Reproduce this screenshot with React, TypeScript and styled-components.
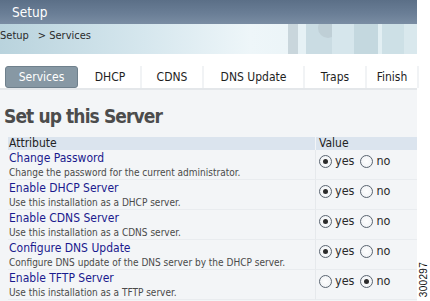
import styled, { createGlobalStyle } from "styled-components";

const GlobalStyle = createGlobalStyle`
  html, body {
    margin: 0;
    padding: 0;
    background: #ffffff;
  }
  body {
    font-family: "DejaVu Sans Condensed", "DejaVu Sans", sans-serif;
  }
`;

const Page = styled.div`
  display: flex;
  width: 430px;
  height: 301px;
  overflow: hidden;
  background: #ffffff;
`;

const Main = styled.div`
  width: 417px;
  display: flex;
  flex-direction: column;
`;

const TitleBar = styled.div`
  height: 24px;
  display: flex;
  align-items: center;
  padding-left: 12px;
  background: linear-gradient(180deg, #5b6f87 0%, #6b7f97 60%, #7a8da3 100%);
  color: #ffffff;
  font-size: 13.5px;
`;

const Crumbs = styled.div`
  height: 30px;
  display: flex;
  align-items: flex-start;
  justify-content: space-between;
  background: linear-gradient(90deg, #b9d3dd 0%, #d6e7ee 35%, #eef6f9 60%, #e4f0f4 100%);
  font-size: 11px;
  color: #2b2b2b;
`;

const Trail = styled.div`
  display: flex;
  gap: 9px;
  padding-top: 5px;
`;

const Deco = styled.svg`
  display: block;
  width: 129px;
  height: 30px;
`;

const TabBar = styled.div`
  display: flex;
  align-items: stretch;
  gap: 2px;
  padding: 12px 0 0 5px;
  height: 22px;
  background: #ffffff;
  border-bottom: 2px solid #e4e7ea;
`;

const Tab = styled.div<{ $active?: boolean; $w: number }>`
  width: ${({ $w }) => $w}px;
  height: 20px;
  display: flex;
  align-items: center;
  justify-content: center;
  font-size: 12px;
  border-radius: ${({ $active }) => ($active ? "3px" : "0")};
  color: ${({ $active }) => ($active ? "#ffffff" : "#1e1e1e")};
  background: ${({ $active }) => ($active ? "#8798a4" : "#ffffff")};
  border: ${({ $active }) => ($active ? "1px solid #6f808c" : "1px solid transparent")};
  box-shadow: ${({ $active }) => ($active ? "none" : "2px 0 0 #f1f3f5")};
`;

const Content = styled.div`
  flex: 1;
  background: #f3f5f7;
  padding: 14px 0 0 4px;
`;

const Heading = styled.h1`
  margin: 0 0 9px;
  font-size: 19px;
  letter-spacing: -0.9px;
  font-weight: bold;
  color: #4c4c4c;
  line-height: 24px;
`;

const Table = styled.div`
  margin-left: 4px;
  display: grid;
  grid-template-columns: 307px 1fr;
`;

const HeadCell = styled.div`
  background: #dbe4ee;
  font-size: 12px;
  line-height: 13px;
  color: #222;
  padding-left: 1px;
  & + & {
    padding-left: 3px;
    border-left: 1px solid #f3f5f7;
  }
`;

const AttrCell = styled.div`
  height: 30px;
  padding-left: 1px;
  border-bottom: 1px solid #e9ecef;
  box-sizing: border-box;
`;

const ValueCell = styled.div`
  height: 30px;
  display: flex;
  align-items: flex-start;
  gap: 6px;
  padding: 3px 0 0 3px;
  box-sizing: border-box;
  border-left: 1px solid #e6e9ec;
  border-bottom: 1px solid #e9ecef;
`;

const Name = styled.div`
  color: #1a1a8e;
  font-size: 12px;
  line-height: 15px;
  padding-top: 1px;
`;

const Desc = styled.div`
  color: #4a4a4a;
  font-size: 10px;
  line-height: 13px;
`;

const Choice = styled.label`
  display: flex;
  align-items: center;
  gap: 3px;
  font-size: 12.5px;
  color: #2a2a2a;
  line-height: 16px;
`;

const Dot = styled.span<{ $on?: boolean }>`
  width: 11px;
  height: 11px;
  border-radius: 50%;
  border: 1px solid #5a6470;
  background: radial-gradient(circle, #ffffff 0%, #eceff2 100%);
  display: flex;
  align-items: center;
  justify-content: center;
  &::after {
    content: "";
    width: 5px;
    height: 5px;
    border-radius: 50%;
    background: ${({ $on }) => ($on ? "#2b2b2b" : "transparent")};
  }
`;

const Side = styled.div`
  flex: 1;
  display: flex;
  align-items: flex-end;
  justify-content: center;
  padding-bottom: 4px;
`;

const FigNo = styled.div`
  writing-mode: vertical-rl;
  transform: rotate(180deg);
  font-family: "Liberation Sans", Arial, sans-serif;
  font-size: 10px;
  color: #111;
  letter-spacing: 0.3px;
`;

const tabs = [
  { label: "Services", w: 71 },
  { label: "DHCP", w: 58 },
  { label: "CDNS", w: 58 },
  { label: "DNS Update", w: 97 },
  { label: "Traps", w: 58 },
  { label: "Finish", w: 48 },
];

const rows = [
  { name: "Change Password", desc: "Change the password for the current administrator.", yes: true },
  { name: "Enable DHCP Server", desc: "Use this installation as a DHCP server.", yes: true },
  { name: "Enable CDNS Server", desc: "Use this installation as a CDNS server.", yes: true },
  { name: "Configure DNS Update", desc: "Configure DNS update of the DNS server by the DHCP server.", yes: true },
  { name: "Enable TFTP Server", desc: "Use this installation as a TFTP server.", yes: false },
];

export default function App() {
  return (
    <>
      <GlobalStyle />
      <Page>
        <Main>
          <TitleBar>Setup</TitleBar>
          <Crumbs>
            <Trail>
              <span>Setup</span>
              <span>&gt; Services</span>
            </Trail>
            <Deco viewBox="0 0 129 30">
              <rect x="0" y="0" width="10" height="30" fill="#c9d6dc" />
              <rect x="10" y="0" width="8" height="30" fill="#e6f1f5" />
              <rect x="18" y="0" width="26" height="30" fill="#cadce3" />
              <circle cx="40" cy="4" r="10" fill="#bfcfd6" />
              <rect x="44" y="0" width="22" height="30" fill="#d6e6ec" />
              <rect x="66" y="0" width="24" height="30" fill="#c4d8df" />
              <rect x="90" y="0" width="4" height="30" fill="#e2eff3" />
              <rect x="94" y="0" width="22" height="30" fill="#cde0e6" />
              <rect x="116" y="0" width="13" height="30" fill="#d9e8ed" />
            </Deco>
          </Crumbs>
          <TabBar>
            {tabs.map((t, i) => (
              <Tab key={t.label} $w={t.w} $active={i === 0}>
                {t.label}
              </Tab>
            ))}
          </TabBar>
          <Content>
            <Heading>Set up this Server</Heading>
            <Table>
              <HeadCell>Attribute</HeadCell>
              <HeadCell>Value</HeadCell>
              {rows.map((r) => (
                <>
                  <AttrCell key={r.name}>
                    <Name>{r.name}</Name>
                    <Desc>{r.desc}</Desc>
                  </AttrCell>
                  <ValueCell key={r.name + "-v"}>
                    <Choice>
                      <Dot $on={r.yes} />
                      yes
                    </Choice>
                    <Choice>
                      <Dot $on={!r.yes} />
                      no
                    </Choice>
                  </ValueCell>
                </>
              ))}
            </Table>
          </Content>
        </Main>
        <Side>
          <FigNo>300297</FigNo>
        </Side>
      </Page>
    </>
  );
}
